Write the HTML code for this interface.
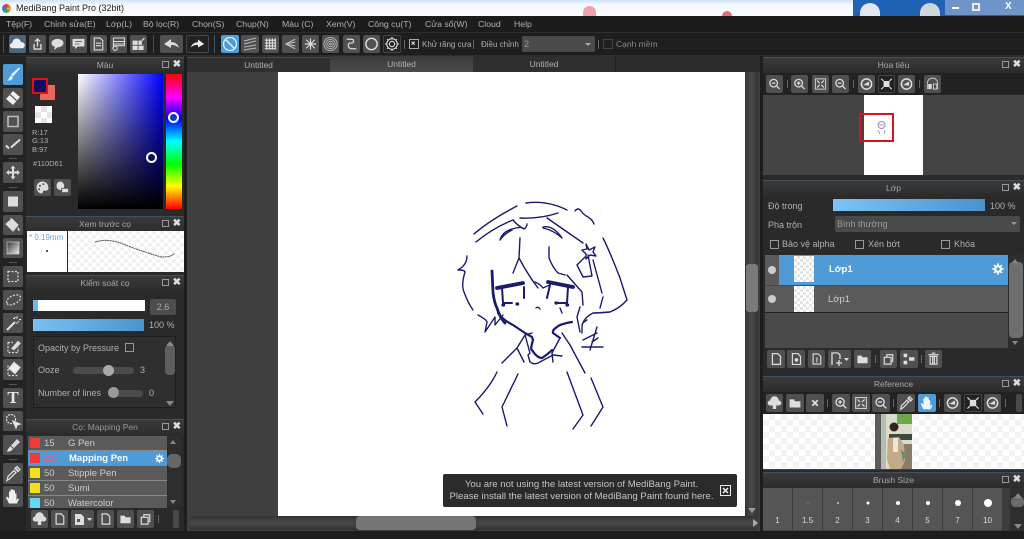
<!DOCTYPE html>
<html><head><meta charset="utf-8"><title>MediBang Paint Pro</title>
<style>
*{box-sizing:border-box}
html,body{margin:0;padding:0;width:1024px;height:539px;overflow:hidden;background:#1d1d1d}
body{position:relative;font-family:"Liberation Sans","Noto Sans CJK SC",sans-serif;font-size:9px;color:#b0b0b0}
.a,.t,.b,.h,.c{position:absolute}
.t{white-space:nowrap;line-height:11px}
.m{font-size:8.7px}
.b{background:#505050;border-radius:2px;display:block}
.b svg{position:absolute;left:0;top:0;width:100%;height:100%}
.bl{background:#4f9cd8}
.dk{background:#222;border:1px solid #444}
.h{background:linear-gradient(#3a3a3a,#2c2c2c);border-top:1px solid #41505c;text-align:center;line-height:15px;color:#a8a8a8;font-size:8.5px;height:16px}
.h i{position:absolute;right:15px;top:3px;width:7px;height:7px;border:1px solid #999;font-size:0}
.h b{position:absolute;right:3px;top:1px;color:#ddd;font-size:10px;line-height:11px}
.c{width:10px;height:10px;border:1px solid #999}
.ck{background-color:#fff;background-image:linear-gradient(45deg,#e4e4e4 25%,transparent 25%,transparent 75%,#e4e4e4 75%),linear-gradient(45deg,#e4e4e4 25%,transparent 25%,transparent 75%,#e4e4e4 75%);background-size:8px 8px;background-position:0 0,4px 4px}
.row{position:absolute;left:28px;width:139px;height:15px;background:#5a5a5a;border-bottom:1px solid #888;color:#ccc;line-height:16px;font-size:9.5px}
.row s{position:absolute;left:2px;top:2px;width:10px;height:10px;text-decoration:none}
.row u{position:absolute;left:16px;text-decoration:none}
.row em{position:absolute;left:40px;font-style:normal}
.cell{position:absolute;top:488px;width:29px;height:43px;background:#555;color:#ddd;text-align:center;font-size:8px;border-bottom:1px solid #444}
.cell s{position:absolute;left:50%;top:15px;border-radius:50%;background:#fff;transform:translate(-50%,-50%)}
.cell u{position:absolute;left:0;right:0;top:27px;text-decoration:none;line-height:11px}
svg.ic{fill:none;stroke:#ddd;stroke-width:1.6}
</style></head><body>

<svg width="0" height="0" style="position:absolute">
<symbol id="page" viewBox="0 0 20 20"><path d="M6 4h6l3 3v9H6z" fill="none" stroke="#ddd" stroke-width="1.4"/></symbol>
<symbol id="folder" viewBox="0 0 20 20"><path d="M4 6h5l1 2h6v7H4z" fill="#ddd"/></symbol>
<symbol id="copy" viewBox="0 0 20 20"><path d="M5 8h8v8H5zM8 8V5h7v8h-2" fill="none" stroke="#ddd" stroke-width="1.4"/></symbol>
<symbol id="plus" viewBox="0 0 20 20"><circle cx="9" cy="9" r="4.5" fill="none" stroke="#ddd" stroke-width="1.5"/><path d="M12 12l4 4M7 9h4M9 7v4" stroke="#ddd" stroke-width="1.5"/></symbol>
<symbol id="minus" viewBox="0 0 20 20"><circle cx="9" cy="9" r="4.5" fill="none" stroke="#ddd" stroke-width="1.5"/><path d="M12 12l4 4M7 9h4" stroke="#ddd" stroke-width="1.5"/></symbol>
<symbol id="fit" viewBox="0 0 20 20"><path d="M4 4h12v12H4z" fill="none" stroke="#ccc" stroke-width="1.2"/><path d="M6 6l3 3M14 6l-3 3M6 14l3-3M14 14l-3-3" stroke="#ddd" stroke-width="1.4"/></symbol>
<symbol id="rotl" viewBox="0 0 20 20"><circle cx="10" cy="10" r="6" fill="none" stroke="#ddd" stroke-width="1.8"/><path d="M6 11l7-4v5z" fill="#ddd"/></symbol>
<symbol id="flip" viewBox="0 0 20 20"><path d="M6 6h8v8H6z" fill="#ddd"/><path d="M3 3l3 3M17 3l-3 3M3 17l3-3M17 17l-3-3" stroke="#ddd" stroke-width="1.5"/></symbol>
<symbol id="cloud" viewBox="0 0 20 20"><path d="M4 15a3 3 0 0 1 0-6 5 5 0 0 1 10-1 3.5 3.5 0 0 1 2 7z" fill="#eee"/></symbol>
<symbol id="gear" viewBox="0 0 20 20"><circle cx="10" cy="10" r="4" fill="none" stroke="#fff" stroke-width="3"/><path d="M10 2v4M10 14v4M2 10h4M14 10h4M4.500 4.500l3 3M12.500 12.500l3 3M15.500 4.500l-3 3M7.500 12.500l-3 3" stroke="#fff" stroke-width="2.400"/></symbol>
<symbol id="upcloud" viewBox="0 0 20 20"><path d="M5 13a3 3 0 0 1 0-6 5 5 0 0 1 10 0 3 3 0 0 1 0 6h-3v4H8v-4z" fill="#ddd"/></symbol>
</svg>

<!-- title bar -->
<div class="a" style="left:0;top:0;width:1024px;height:16px;background:linear-gradient(#cfe3f7,#f4f9fd 30%,#fafcff)"></div>
<div class="a" style="left:853px;top:0;width:171px;height:16px;background:#1f63b4"></div>
<div class="a" style="left:945px;top:0;width:79px;height:15px;background:#6d95c8"></div>
<div class="a" style="left:583px;top:6px;width:13px;height:10px;border-radius:7px 7px 0 0;background:#efa1ac"></div>
<div class="a" style="left:722px;top:11px;width:10px;height:5px;border-radius:5px 5px 0 0;background:#e86a75"></div>
<div class="a" style="left:860px;top:3px;width:20px;height:13px;border-radius:10px 10px 0 0;background:#dfe8f2"></div>
<div class="a" style="left:920px;top:3px;width:20px;height:13px;border-radius:10px 10px 0 0;background:#cfd6dd"></div>
<div class="a" style="left:2px;top:4px;width:9px;height:9px;border-radius:50%;background:conic-gradient(#e33,#ea3 25%,#3a5 50%,#37c 75%,#e33)"></div>
<div class="t" style="left:16px;top:3px;color:#222;font-size:9px">MediBang Paint Pro (32bit)</div>
<div class="a" style="left:952px;top:7px;width:7px;height:2px;background:#fff"></div>
<div class="a" style="left:972px;top:3px;width:8px;height:8px;border:2px solid #eee"></div>
<div class="t" style="left:1005px;top:1px;color:#fff;font-size:10px;font-weight:bold">X</div>

<!-- menu -->
<div class="a" style="left:0;top:16px;width:1024px;height:17px;background:#1c1c1c;border-bottom:1px solid #2c2c2c"></div>
<div class="t m" style="left:6px;top:19px">Tệp(F)</div>
<div class="t m" style="left:44px;top:19px">Chỉnh sửa(E)</div>
<div class="t m" style="left:106px;top:19px">Lớp(L)</div>
<div class="t m" style="left:143px;top:19px">Bộ lọc(R)</div>
<div class="t m" style="left:192px;top:19px">Chọn(S)</div>
<div class="t m" style="left:236px;top:19px">Chụp(N)</div>
<div class="t m" style="left:282px;top:19px">Màu (C)</div>
<div class="t m" style="left:326px;top:19px">Xem(V)</div>
<div class="t m" style="left:368px;top:19px">Công cụ(T)</div>
<div class="t m" style="left:425px;top:19px">Cửa sổ(W)</div>
<div class="t m" style="left:478px;top:19px">Cloud</div>
<div class="t m" style="left:514px;top:19px">Help</div>

<!-- toolbar -->
<div class="a" style="left:0;top:33px;width:1024px;height:23px;background:#1e1e1e;border-bottom:1px solid #2d2d2d"></div>
<div class="a" style="left:3px;top:35px;width:1px;height:18px;background:#35566f"></div>
<div class="b" style="left:9px;top:35px;width:17px;height:18px;background:#4a6580"><svg><use href="#cloud"/></svg></div>
<div class="b" style="left:29px;top:35px;width:17px;height:18px"><svg viewBox="0 0 20 20" class="ic"><path d="M6 10v6h8v-6M10 13V4M7 7l3-3 3 3"/></svg></div>
<div class="b" style="left:49px;top:35px;width:17px;height:18px"><svg viewBox="0 0 20 20"><ellipse cx="10" cy="9" rx="7" ry="5" fill="#ddd"/><path d="M7 13l-1 4 4-3z" fill="#ddd"/></svg></div>
<div class="b" style="left:70px;top:35px;width:17px;height:18px"><svg viewBox="0 0 20 20"><path d="M3 4h14v9H9l-3 3v-3H3z" fill="#ddd"/><path d="M6 7h8M6 10h5" stroke="#555"/></svg></div>
<div class="b" style="left:90px;top:35px;width:17px;height:18px"><svg viewBox="0 0 20 20" class="ic" style="stroke-width:1.3"><path d="M5 3h7l3 3v11H5zM7 9h6M7 12h6"/></svg></div>
<div class="b" style="left:110px;top:35px;width:17px;height:18px"><svg viewBox="0 0 20 20" class="ic" style="stroke-width:1.2"><path d="M4 3h13v9H4zM4 7h13M4 10h13M4 12v3"/><circle cx="6" cy="15" r="2.500"/></svg></div>
<div class="b" style="left:130px;top:35px;width:17px;height:18px"><svg viewBox="0 0 20 20"><path d="M3 6h6v5H3zM10 6h4v5h-4zM3 12h6v5H3zM10 12h6v5h-6z" fill="#ddd"/><path d="M14 6l3-3" stroke="#ddd" stroke-width="1.500"/></svg></div>
<div class="a" style="left:153px;top:35px;width:1px;height:18px;background:#35566f"></div>
<div class="b" style="left:160px;top:35px;width:23px;height:18px"><svg viewBox="0 0 23 18"><path d="M4 9l7-5v3c4 0 7 2 8 6-2-2-4-3-8-3v3z" fill="#ddd"/></svg></div>
<div class="b dk" style="left:186px;top:35px;width:23px;height:18px"><svg viewBox="0 0 23 18"><path d="M19 9l-7-5v3c-4 0-7 2-8 6 2-2 4-3 8-3v3z" fill="#eee"/></svg></div>
<div class="a" style="left:214px;top:35px;width:1px;height:18px;background:#35566f"></div>
<div class="b bl" style="left:221px;top:35px;width:18px;height:18px"><svg viewBox="0 0 18 18" class="ic" style="stroke:#e8f4ff;stroke-width:1.300"><circle cx="9" cy="9" r="6.500"/><path d="M4.500 4.500l9 9"/></svg></div>
<div class="b" style="left:241px;top:35px;width:18px;height:18px"><svg viewBox="0 0 18 18" class="ic" style="stroke-width:1;stroke:#bbb"><path d="M3 6l12-3M3 9l12-3M3 12l12-2M3 15l12-2"/></svg></div>
<div class="b" style="left:262px;top:35px;width:17px;height:18px"><svg viewBox="0 0 18 18" class="ic" style="stroke-width:1.200"><path d="M3 5h12M3 8h12M3 11h12M3 14h12M5 3v12M8 3v12M11 3v12M14 3v12"/></svg></div>
<div class="b" style="left:282px;top:35px;width:17px;height:18px"><svg viewBox="0 0 18 18" class="ic" style="stroke-width:1.200;stroke:#bbb"><path d="M14 4L4 9l10 5M14 7L4 9l10 2"/></svg></div>
<div class="b" style="left:302px;top:35px;width:17px;height:18px"><svg viewBox="0 0 18 18" class="ic" style="stroke-width:1.200"><path d="M9 3v12M3 9h12M4.500 4.500l9 9M13.500 4.500l-9 9"/></svg></div>
<div class="b" style="left:322px;top:35px;width:17px;height:18px"><svg viewBox="0 0 18 18" class="ic" style="stroke-width:.9;stroke:#bbb"><circle cx="9" cy="9" r="7"/><circle cx="9" cy="9" r="5"/><circle cx="9" cy="9" r="3"/><circle cx="9" cy="9" r="1"/></svg></div>
<div class="b" style="left:343px;top:35px;width:17px;height:18px"><svg viewBox="0 0 18 18" class="ic" style="stroke-width:1.300"><path d="M4 4h5c3 0 3 4 0 4H7c-2 0-2 6 2 6h5"/></svg></div>
<div class="b" style="left:363px;top:35px;width:17px;height:18px"><svg viewBox="0 0 18 18" class="ic" style="stroke-width:1.500"><circle cx="9" cy="9" r="6"/></svg></div>
<div class="b dk" style="left:383px;top:35px;width:18px;height:18px"><svg viewBox="0 0 18 18" class="ic" style="stroke-width:1.200"><circle cx="9" cy="9" r="3"/><circle cx="9" cy="9" r="6"/><path d="M9 1v2M9 15v2M1 9h2M15 9h2M3.500 3.500l1.500 1.500M13 13l1.500 1.500M14.500 3.500L13 5M5 13l-1.500 1.500"/></svg></div>
<div class="a" style="left:404px;top:40px;width:1px;height:9px;background:#666"></div>
<div class="c" style="left:409px;top:39px;border-color:#aaa"><svg viewBox="0 0 10 10" style="position:absolute;left:0;top:0;width:8px;height:8px"><path d="M2 2l4 4M6 2l-4 4" stroke="#ddd" stroke-width="1.300"/></svg></div>
<div class="t" style="left:422px;top:39px;font-size:8px">Khử răng cưa</div>
<div class="a" style="left:473px;top:40px;width:1px;height:9px;background:#666"></div>
<div class="t" style="left:481px;top:39px;font-size:8px">Điều chỉnh</div>
<div class="a" style="left:522px;top:36px;width:73px;height:16px;background:#4a4a4a;border-radius:2px"></div>
<div class="t" style="left:524px;top:39px;color:#999">2</div>
<div class="a" style="left:585px;top:43px;border:3px solid transparent;border-top:3px solid #aaa"></div>
<div class="a" style="left:598px;top:40px;width:1px;height:9px;background:#666"></div>
<div class="c" style="left:603px;top:39px;border-color:#444"></div>
<div class="t" style="left:616px;top:39px;font-size:8.5px;color:#888">Cạnh mềm</div>

<!-- tabs and canvas -->
<div class="a" style="left:187px;top:56px;width:573px;height:16px;background:#2c2c2c"></div>
<div class="a" style="left:187px;top:57px;width:143px;height:15px;background:#2f2f2f;border-top:1px solid #3c4d5c;text-align:center;line-height:15px;font-size:8.500px">Untitled</div>
<div class="a" style="left:330px;top:56px;width:143px;height:16px;background:linear-gradient(#3b3b3b,#4a4a4a);text-align:center;line-height:17px;font-size:8.500px">Untitled</div>
<div class="a" style="left:473px;top:57px;width:143px;height:15px;background:#2f2f2f;text-align:center;line-height:15px;font-size:8.500px;border-right:1px solid #222">Untitled</div>
<div class="a" style="left:187px;top:72px;width:573px;height:459px;background:#3f3f3f"></div>
<div class="a" style="left:278px;top:72px;width:467px;height:444px;background:#fff"></div>

<svg class="a" style="left:0;top:0" width="1024" height="539" viewBox="0 0 1024 539" fill="none" stroke="#1c1a6e" stroke-width="1.400" stroke-linecap="round" stroke-linejoin="round">
<path d="M474 234Q490 220 517 206M526 203Q547 200 567 210M575 211Q578 207 581 211T588 217T594 224M476 242Q493 228 513 220M520 218Q540 219 558 213"/>
<path d="M500 240Q502 232 512 229T524 229M513 220Q518 226 524 229Q527 227 527 224M500 240Q504 234 512 230M543 227Q553 225 562 238M543 228Q553 230 562 238M547 218L583 243"/>
<path d="M586 244L589 250L595 247L593 252L596 256L590 255L586 259L586 254L582 250L587 249Z"/>
<path d="M585 257L577 265L583 277L592 276L588 255M603 238Q610 252 620 278L627 300Q620 308 610 312Q598 313 593 313Q585 317 583 323M593 260L602 293M603 297L600 308"/>
<path d="M467 256Q467 265 458 270Q465 270 465 272Q461 285 464 292Q468 303 473 310"/>
<path d="M520 238L519 258L513 273M519 258Q528 275 538 288M549 247V258Q553 268 558 273L565 275M535 282Q540 284 543 288Q547 286 550 285M567 275L582 292L583 305"/>
<path d="M497 288L523 283M548 282L573 287" stroke-width="3.800"/>
<path d="M492 271L493 292Q494 302 497 308Q500 318 505 323" stroke-width="2.800"/>
<path d="M502 288L503 303M524 287V298M550 285L547 298M568 287L567 303M503 303L512 303M558 303L567 303" stroke-width="2"/>
<path d="M503 305h.6M517 304h.6M556 303h.6M567 305h.6" stroke-width="3.200"/>
<path d="M536 308Q538 306 540 309M560 308L562 313"/>
<path d="M498 313Q503 320 513 325L525 333L532 337L533 340" stroke-width="2.200"/>
<path d="M533 340Q530 350 532 350Q537 358 542 358Q548 354 552 350M572 322Q560 324 557 327Q552 330 553 333L560 338" stroke-width="2.200"/>
<path d="M560 338L552 353L553 362M528 355L530 362Q534 365 538 363L553 355L562 356M532 333L525 335L517 348L524 362M517 348L502 363M525 335L530 353L528 355"/>
<path d="M478 315Q487 320 487 322L485 332L495 317V325L503 315M562 333L570 345L585 373"/>
<path d="M497 372Q490 387 475 402L483 414M518 374L502 407L507 426M567 372L583 415L573 429M591 378L603 407L591 426"/>
<path d="M587 320Q582 323 582 325V333M580 307L577 317L580 332M597 327L590 350M582 347L603 347M583 340L597 333M592 342L598 338"/>
</svg>

<!-- notification -->
<div class="a" style="left:443px;top:474px;width:294px;height:33px;background:#2b2b2b;border-radius:2px"></div>
<div class="t" style="left:447px;top:479px;width:269px;text-align:center;color:#c4c4c4;font-size:9.6px;line-height:12px">You are not using the latest version of MediBang Paint.<br>Please install the latest version of MediBang Paint found here.</div>
<div class="a" style="left:720px;top:485px;width:11px;height:11px;border:1px solid #eee"><svg viewBox="0 0 9 9" style="position:absolute;left:0;top:0;width:9px;height:9px"><path d="M2 2l5 5M7 2L2 7" stroke="#eee" stroke-width="1.500"/></svg></div>

<!-- canvas scrollbars -->
<div class="a" style="left:745px;top:72px;width:13px;height:444px;background:linear-gradient(90deg,#333,#4a4a4a,#333)"></div>
<div class="a" style="left:746px;top:264px;width:12px;height:48px;background:#7a7a7a;border-radius:3px"></div>
<div class="a" style="left:748px;top:508px;border:4px solid transparent;border-top:5px solid #999"></div>
<div class="a" style="left:190px;top:516px;width:568px;height:14px;background:linear-gradient(#333,#484848,#333)"></div>
<div class="a" style="left:356px;top:516px;width:120px;height:14px;background:#757575;border-radius:4px"></div>
<div class="a" style="left:753px;top:519px;border:4px solid transparent;border-left:5px solid #aaa"></div>

<!-- tool strip -->
<div class="a" style="left:0;top:56px;width:26px;height:475px;background:#232323"></div>
<div class="b bl" style="left:3px;top:64px;width:20px;height:21px"><svg viewBox="0 0 20 20"><path d="M16 3l1 1-7 8-2-2zM8 11l2 2c-1 3-3 3-6 3 2-1 2-3 4-5z" fill="#eef6ff"/></svg></div>
<div class="b" style="left:3px;top:88px;width:20px;height:20px"><svg viewBox="0 0 20 20"><path d="M10 3l7 6-7 8-7-6z" fill="#eee"/><path d="M7 6.500l6.500 6" stroke="#555" stroke-width="1.200"/></svg></div>
<div class="b" style="left:3px;top:111px;width:20px;height:21px"><svg viewBox="0 0 20 20" class="ic" style="stroke:#bbb"><path d="M5 5h10v10H5z"/></svg></div>
<div class="b" style="left:3px;top:134px;width:20px;height:21px"><svg viewBox="0 0 20 20" class="ic" style="stroke-width:2"><path d="M3 11l3 3M8 13l9-8" /></svg></div>
<div class="a" style="left:9px;top:158px;width:8px;height:1px;background:#555"></div>
<div class="b" style="left:3px;top:162px;width:20px;height:21px"><svg viewBox="0 0 20 20"><path d="M10 3l2.500 3h-1.500v3h3V7.500l3 2.500-3 2.500V11h-3v3h1.500L10 17l-2.500-3H9v-3H6v1.500L3 10l3-2.500V9h3V6H7.500z" fill="#ddd"/></svg></div>
<div class="a" style="left:9px;top:187px;width:8px;height:1px;background:#555"></div>
<div class="b" style="left:3px;top:191px;width:20px;height:21px"><svg viewBox="0 0 20 20"><rect x="5" y="5" width="10" height="10" fill="#ddd"/></svg></div>
<div class="b" style="left:3px;top:215px;width:20px;height:20px"><svg viewBox="0 0 20 20"><path d="M3 9l6-5 6 6-5 6zM8 3v4" fill="#ddd" stroke="#ddd"/><path d="M15 12c2 2 2 4 1 4s-2-2-1-4z" fill="#ddd"/></svg></div>
<div class="b" style="left:3px;top:238px;width:20px;height:20px"><svg viewBox="0 0 20 20"><defs><linearGradient id="g1" x1="0" y1="0" x2="1" y2="1"><stop offset="0" stop-color="#333"/><stop offset="1" stop-color="#eee"/></linearGradient></defs><rect x="4" y="4" width="12" height="12" fill="url(#g1)" stroke="#ccc" stroke-width=".7"/></svg></div>
<div class="a" style="left:9px;top:262px;width:8px;height:1px;background:#555"></div>
<div class="b" style="left:3px;top:266px;width:20px;height:21px"><svg viewBox="0 0 20 20" class="ic" style="stroke-dasharray:2 1.500;stroke-width:1.200"><path d="M5 5h10v10H5z"/></svg></div>
<div class="b" style="left:3px;top:290px;width:20px;height:20px"><svg viewBox="0 0 20 20" class="ic" style="stroke-dasharray:2 1.500;stroke-width:1.200"><path d="M4 13c-2-4 6-9 11-8s2 7-4 9-6 1-7-1z"/></svg></div>
<div class="b" style="left:3px;top:313px;width:20px;height:20px"><svg viewBox="0 0 20 20" class="ic"><path d="M4 17L12 9" stroke-width="2.200"/><path d="M14 3v3M14 9v2M10 5.500h2M16 6.500h2M11.500 4l1 1M16 9l-1-1" stroke-width="1"/></svg></div>
<div class="b" style="left:3px;top:336px;width:20px;height:21px"><svg viewBox="0 0 20 20" class="ic" style="stroke-width:1.200"><path d="M5 6h5M5 6v10h10v-5" stroke-dasharray="2 1.500"/><path d="M9 12l6-7 2 2-6 6z" fill="#ddd"/></svg></div>
<div class="b" style="left:3px;top:359px;width:20px;height:21px"><svg viewBox="0 0 20 20" class="ic" style="stroke-width:1.200"><path d="M5 6v10h10" stroke-dasharray="2 1.500"/><path d="M11 3l6 5-5 6-6-5z" fill="#eee"/></svg></div>
<div class="a" style="left:9px;top:384px;width:8px;height:1px;background:#555"></div>
<div class="b" style="left:3px;top:388px;width:20px;height:20px;text-align:center;font:bold 17px/20px 'Liberation Serif',serif;color:#e6e6e6">T</div>
<div class="b" style="left:3px;top:411px;width:20px;height:20px"><svg viewBox="0 0 20 20" class="ic" style="stroke-width:1.200"><circle cx="8" cy="8" r="4.500" stroke-dasharray="2 1"/><path d="M10 10l7 3-3 1-1 3z" fill="#eee"/></svg></div>
<div class="b" style="left:3px;top:435px;width:20px;height:20px"><svg viewBox="0 0 20 20"><path d="M5 14L14 4l3 3-9 9-4 1z" fill="#ddd"/><path d="M8 11l3 3" stroke="#555" stroke-width="1"/></svg></div>
<div class="a" style="left:9px;top:459px;width:8px;height:1px;background:#555"></div>
<div class="b" style="left:3px;top:463px;width:20px;height:21px"><svg viewBox="0 0 20 20" class="ic" style="stroke-width:1.300"><path d="M4 17l1-4 6-6 2 2-6 6zM12 4l4 4M14 3l3 3-2 2-3-3z"/></svg></div>
<div class="b" style="left:3px;top:486px;width:20px;height:21px"><svg viewBox="0 0 20 20"><path d="M6 17l-3-6 1-1 2 2V5h1.500v5-7H9v7-7h1.500v7-6H12v7-4h1.500v7l1-2 1.500.5L14 17z" fill="#eee"/></svg></div>

<!-- left panels -->
<div class="a" style="left:26px;top:56px;width:158px;height:475px;background:#2a2a2a"></div>
<div class="h" style="left:26px;top:57px;width:158px">Màu<i></i><b>✖</b></div>
<div class="a" style="left:32px;top:78px;width:16px;height:16px;background:#110d61;border:2px solid #e01018;z-index:2"></div>
<div class="a" style="left:40px;top:85px;width:15px;height:15px;background:#e8695a"></div>
<div class="a ck" style="left:35px;top:106px;width:17px;height:17px;background-size:12px 12px;background-position:0 0,6px 6px"></div>
<div class="t" style="left:32px;top:129px;font-size:7.500px;line-height:8.300px">R:17<br>G:13<br>B:97</div>
<div class="t" style="left:33px;top:158px;font-size:7.500px">#110D61</div>
<div class="b" style="left:34px;top:179px;width:17px;height:17px"><svg viewBox="0 0 20 20"><path d="M10 3c-4 0-7 3-7 7s3 7 6 7c2 0 1-2 2-3s5 1 6-3c0-5-3-8-7-8z" fill="#ddd"/><circle cx="7" cy="8" r="1.200" fill="#555"/><circle cx="11" cy="6" r="1.200" fill="#555"/><circle cx="6" cy="12" r="1.200" fill="#555"/></svg></div>
<div class="b" style="left:54px;top:179px;width:17px;height:17px"><svg viewBox="0 0 20 20"><path d="M8 3C5 3 3 5 3 8s2 5 5 5 4-3 4-5-2-5-4-5z" fill="#ddd"/><rect x="9" y="11" width="8" height="5" fill="#ddd" stroke="#555"/></svg></div>
<div class="a" style="left:78px;top:74px;width:85px;height:135px;background:linear-gradient(transparent,#000),linear-gradient(90deg,#fff,#0000ff)"></div>
<div class="a" style="left:166px;top:74px;width:16px;height:135px;background:linear-gradient(#f00,#f0f 17%,#00f 33%,#0ff 50%,#0f0 67%,#ff0 83%,#f00)"></div>
<div class="a" style="left:168px;top:112px;width:11px;height:11px;border-radius:50%;border:2px solid #fff;background:#0a36d0"></div>
<div class="a" style="left:146px;top:152px;width:11px;height:11px;border-radius:50%;border:2px solid #fff"></div>

<div class="h" style="left:26px;top:216px;width:158px">Xem trước cọ<i></i><b>✖</b></div>
<div class="a" style="left:27px;top:231px;width:40px;height:41px;background:#fff"></div>
<div class="t" style="left:29px;top:232px;font-size:8px;color:#62acdf">* 0.19mm</div>
<div class="a" style="left:46px;top:250px;width:2px;height:2px;background:#555"></div>
<div class="a ck" style="left:68px;top:231px;width:116px;height:41px;background-image:linear-gradient(45deg,#f2f2f2 25%,transparent 25%,transparent 75%,#f2f2f2 75%),linear-gradient(45deg,#f2f2f2 25%,transparent 25%,transparent 75%,#f2f2f2 75%)"></div>
<svg class="a" style="left:68px;top:231px" width="116" height="41"><path d="M27 11Q40 7 55 13T93 26Q105 26 106 22" fill="none" stroke="#555" stroke-width="1" stroke-dasharray="2 .5"/></svg>

<div class="h" style="left:26px;top:275px;width:158px">Kiểm soát cọ<i></i><b>✖</b></div>
<div class="a" style="left:33px;top:300px;width:112px;height:11px;background:#fff"></div>
<div class="a" style="left:33px;top:300px;width:5px;height:11px;background:#6db8ec"></div>
<div class="a" style="left:150px;top:299px;width:26px;height:16px;background:#4d4d4d;text-align:center;line-height:16px;font-size:9px;border-radius:2px;color:#aaa">2.6</div>
<div class="a" style="left:33px;top:319px;width:111px;height:12px;background:linear-gradient(90deg,#79c1f2,#4a94cf)"></div>
<div class="t" style="left:149px;top:320px;font-size:9px">100 %</div>
<div class="a" style="left:33px;top:336px;width:143px;height:72px;background:#2f2f2f;border:1px solid #1e1e1e"></div>
<div class="t" style="left:38px;top:343px;font-size:9px">Opacity by Pressure</div>
<div class="c" style="left:125px;top:343px;width:9px;height:9px"></div>
<div class="t" style="left:38px;top:365px;font-size:9px">Ooze</div>
<div class="a" style="left:73px;top:367px;width:61px;height:7px;background:#4c4c4c;border-radius:4px"></div>
<div class="a" style="left:103px;top:365px;width:11px;height:11px;background:#aaa;border-radius:50%"></div>
<div class="t" style="left:140px;top:365px;font-size:9px">3</div>
<div class="t" style="left:38px;top:388px;font-size:9px">Number of lines</div>
<div class="a" style="left:108px;top:390px;width:35px;height:7px;background:#4c4c4c;border-radius:4px"></div>
<div class="a" style="left:108px;top:387px;width:11px;height:11px;background:#999;border-radius:50%"></div>
<div class="t" style="left:149px;top:388px;font-size:9px">0</div>
<div class="a" style="left:165px;top:345px;width:10px;height:30px;background:#5e5e5e;border-radius:4px"></div>
<div class="a" style="left:166px;top:337px;border:4px solid transparent;border-bottom:5px solid #888"></div>
<div class="a" style="left:166px;top:401px;border:4px solid transparent;border-top:5px solid #888"></div>

<div class="h" style="left:26px;top:419px;width:158px;color:#999">Cọ: Mapping Pen<i></i><b>✖</b></div>
<div class="row" style="top:436px"><s style="background:#f23a3a"></s><u>15</u><em>G Pen</em></div>
<div class="row" style="top:451px;background:#4d9bd8;color:#fff;font-weight:bold"><s style="background:#f23a3a"></s><u style="color:#f55a7a">2.6</u><em style="left:41px">Mapping Pen</em><svg style="position:absolute;left:126px;top:2px" width="11" height="11"><use href="#gear"/></svg></div>
<div class="row" style="top:466px"><s style="background:#f2df1f"></s><u>50</u><em>Stipple Pen</em></div>
<div class="row" style="top:481px"><s style="background:#f2df1f"></s><u>50</u><em>Sumi</em></div>
<div class="row" style="top:496px;height:12px;overflow:hidden;border:0"><s style="background:#66d6f6"></s><u>50</u><em>Watercolor</em></div>
<div class="a" style="left:168px;top:436px;width:13px;height:72px;background:#2e2e2e"></div>
<div class="a" style="left:167px;top:454px;width:14px;height:14px;background:#666;border-radius:5px"></div>
<div class="a" style="left:170px;top:437px;border:3px solid transparent;border-bottom:4px solid #888"></div>
<div class="a" style="left:170px;top:500px;border:3px solid transparent;border-top:4px solid #888"></div>
<div class="b" style="left:31px;top:510px;width:17px;height:18px"><svg><use href="#upcloud"/></svg></div>
<div class="b" style="left:51px;top:510px;width:17px;height:18px"><svg><use href="#page"/></svg></div>
<div class="b" style="left:71px;top:510px;width:23px;height:18px"><svg viewBox="0 0 23 18"><path d="M4 4h6l3 3v8H4z" fill="#ddd"/><path d="M6 9h3v3H6z" fill="#555"/><path d="M16 8h5l-2.500 3z" fill="#ddd"/></svg></div>
<div class="b" style="left:97px;top:510px;width:17px;height:18px"><svg><use href="#page"/></svg></div>
<div class="b" style="left:117px;top:510px;width:17px;height:18px"><svg><use href="#folder"/></svg></div>
<div class="b" style="left:137px;top:510px;width:17px;height:18px"><svg><use href="#copy"/></svg></div>
<div class="a" style="left:158px;top:515px;width:1px;height:8px;background:#666"></div>
<div class="a" style="left:173px;top:510px;width:6px;height:18px;background:#4a4a4a;border-radius:2px"></div>

<!-- right panels -->
<div class="a" style="left:763px;top:56px;width:261px;height:475px;background:#2a2a2a"></div>
<div class="h" style="left:763px;top:57px;width:261px">Hoa tiêu<i></i><b>✖</b></div>
<div class="a" style="left:763px;top:73px;width:261px;height:22px;background:#222"></div>
<div class="b" style="left:766px;top:75px;width:17px;height:18px"><svg><use href="#minus"/></svg></div>
<div class="a" style="left:787px;top:80px;width:1px;height:8px;background:#666"></div>
<div class="b" style="left:791px;top:75px;width:17px;height:18px"><svg><use href="#plus"/></svg></div>
<div class="b" style="left:812px;top:75px;width:17px;height:18px"><svg><use href="#fit"/></svg></div>
<div class="b" style="left:832px;top:75px;width:17px;height:18px"><svg><use href="#minus"/></svg></div>
<div class="a" style="left:853px;top:80px;width:1px;height:8px;background:#666"></div>
<div class="b" style="left:858px;top:75px;width:17px;height:18px"><svg><use href="#rotl"/></svg></div>
<div class="b dk" style="left:878px;top:75px;width:17px;height:18px"><svg><use href="#flip"/></svg></div>
<div class="b" style="left:898px;top:75px;width:17px;height:18px"><svg><use href="#rotl"/></svg></div>
<div class="a" style="left:919px;top:80px;width:1px;height:8px;background:#666"></div>
<div class="b" style="left:924px;top:75px;width:17px;height:18px"><svg viewBox="0 0 20 20"><path d="M4 16V9a6 6 0 0 1 12 0v7" fill="none" stroke="#ccc"/><path d="M5 10h4v6H5z" fill="#ddd"/><path d="M11 10h4v6h-4z" fill="none" stroke="#ddd"/></svg></div>
<div class="a" style="left:763px;top:95px;width:261px;height:80px;background:#444"></div>
<div class="a" style="left:864px;top:95px;width:59px;height:80px;background:#fff"></div>
<div class="a" style="left:859px;top:113px;width:35px;height:29px;border:2px solid #e01018"></div>
<svg class="a" style="left:876px;top:120px" width="12" height="15"><circle cx="5.500" cy="5" r="3.500" fill="none" stroke="#8d8fbf"/><path d="M3 5h5M2 10l2 4M9 10l-1 4" stroke="#9a9cc8" fill="none"/></svg>

<div class="h" style="left:763px;top:180px;width:261px">Lớp<i></i><b>✖</b></div>
<div class="t" style="left:768px;top:201px">Độ trong</div>
<div class="a" style="left:833px;top:199px;width:152px;height:12px;background:linear-gradient(90deg,#7cc4f5,#4a92cc)"></div>
<div class="t" style="left:990px;top:201px">100 %</div>
<div class="t" style="left:768px;top:220px">Pha trộn</div>
<div class="a" style="left:835px;top:216px;width:185px;height:16px;background:#4a4a4a;border-radius:2px"></div>
<div class="t" style="left:837px;top:219px;color:#999">Bình thường</div>
<div class="a" style="left:1011px;top:222px;border:3px solid transparent;border-top:3px solid #999"></div>
<div class="c" style="left:770px;top:240px;width:9px;height:9px"></div>
<div class="t" style="left:782px;top:239px">Bảo vệ alpha</div>
<div class="c" style="left:855px;top:240px;width:9px;height:9px"></div>
<div class="t" style="left:868px;top:239px">Xén bớt</div>
<div class="c" style="left:941px;top:240px;width:9px;height:9px"></div>
<div class="t" style="left:954px;top:239px">Khóa</div>
<div class="a" style="left:765px;top:255px;width:243px;height:93px;background:#4a4a4a"></div>
<div class="a" style="left:765px;top:255px;width:14px;height:30px;background:#5a5a5a"></div>
<div class="a" style="left:779px;top:255px;width:229px;height:30px;background:#4e9bd7"></div>
<div class="a" style="left:765px;top:286px;width:243px;height:27px;background:#5a5a5a;border-bottom:1px solid #222"></div>
<div class="a" style="left:768px;top:266px;width:8px;height:8px;border-radius:50%;background:#ccc"></div>
<div class="a" style="left:768px;top:295px;width:8px;height:8px;border-radius:50%;background:#ccc"></div>
<div class="a ck" style="left:794px;top:256px;width:20px;height:26px;background-size:6px 6px;background-position:0 0,3px 3px"></div>
<div class="a ck" style="left:794px;top:286px;width:20px;height:26px;background-size:6px 6px;background-position:0 0,3px 3px"></div>
<div class="t" style="left:829px;top:264px;color:#fff;font-weight:bold;font-size:9.500px">Lớp1</div>
<div class="t" style="left:828px;top:294px;color:#ccc;font-size:9.500px">Lớp1</div>
<svg class="a" style="left:991px;top:262px" width="14" height="14"><use href="#gear"/></svg>
<div class="a" style="left:1009px;top:255px;width:15px;height:93px;background:#2e2e2e"></div>
<div class="a" style="left:1009px;top:262px;width:14px;height:76px;background:#6e6e6e;border-radius:4px"></div>
<div class="a" style="left:1012px;top:256px;border:3px solid transparent;border-bottom:4px solid #888"></div>
<div class="a" style="left:1012px;top:341px;border:3px solid transparent;border-top:4px solid #888"></div>
<div class="b" style="left:767px;top:350px;width:18px;height:18px"><svg><use href="#page"/></svg></div>
<div class="b" style="left:787px;top:350px;width:18px;height:18px"><svg viewBox="0 0 20 20"><path d="M6 4h6l3 3v9H6z" fill="none" stroke="#ddd" stroke-width="1.300"/><circle cx="10.500" cy="11" r="2" fill="#ddd"/></svg></div>
<div class="b" style="left:808px;top:350px;width:17px;height:18px"><svg viewBox="0 0 20 20"><path d="M6 4h6l3 3v9H6z" fill="none" stroke="#ddd" stroke-width="1.300"/><path d="M10.500 8v6" stroke="#ddd" stroke-width="1.300"/></svg></div>
<div class="b" style="left:828px;top:350px;width:23px;height:18px"><svg viewBox="0 0 23 18"><path d="M4 15V3h6l2 2v4M8 13h6M11 10v6" fill="none" stroke="#ddd" stroke-width="1.300"/><path d="M16 8h5l-2.500 3z" fill="#ddd"/></svg></div>
<div class="b" style="left:854px;top:350px;width:17px;height:18px"><svg><use href="#folder"/></svg></div>
<div class="a" style="left:875px;top:355px;width:1px;height:8px;background:#666"></div>
<div class="b" style="left:880px;top:350px;width:17px;height:18px"><svg><use href="#copy"/></svg></div>
<div class="b" style="left:900px;top:350px;width:18px;height:18px"><svg viewBox="0 0 20 20"><path d="M4 4h4v4H4zM4 12h4v4H4zM10 8h6v4h-6z" fill="#ddd"/></svg></div>
<div class="a" style="left:921px;top:355px;width:1px;height:8px;background:#666"></div>
<div class="b" style="left:925px;top:350px;width:17px;height:18px"><svg viewBox="0 0 20 20"><path d="M4 5h12M6 7h8v9H6zM8 3h4M9 7v9M11 7v9" fill="none" stroke="#ddd" stroke-width="1.400"/></svg></div>

<div class="h" style="left:763px;top:376px;width:261px">Reference<i></i><b>✖</b></div>
<div class="a" style="left:763px;top:392px;width:261px;height:22px;background:#222"></div>
<div class="b" style="left:766px;top:394px;width:17px;height:18px"><svg><use href="#upcloud"/></svg></div>
<div class="b" style="left:786px;top:394px;width:18px;height:18px"><svg><use href="#folder"/></svg></div>
<div class="b" style="left:806px;top:394px;width:18px;height:18px"><svg viewBox="0 0 20 20"><path d="M7 7l6 6M13 7l-6 6" stroke="#ddd" stroke-width="2"/></svg></div>
<div class="a" style="left:827px;top:399px;width:1px;height:8px;background:#666"></div>
<div class="b" style="left:832px;top:394px;width:18px;height:18px"><svg><use href="#plus"/></svg></div>
<div class="b" style="left:852px;top:394px;width:18px;height:18px"><svg><use href="#fit"/></svg></div>
<div class="b" style="left:872px;top:394px;width:18px;height:18px"><svg><use href="#minus"/></svg></div>
<div class="a" style="left:893px;top:399px;width:1px;height:8px;background:#666"></div>
<div class="b" style="left:897px;top:394px;width:18px;height:18px"><svg viewBox="0 0 20 20" class="ic" style="stroke-width:1.300"><path d="M4 17l1-4 6-6 2 2-6 6zM12 4l4 4M14 3l3 3-2 2-3-3z"/></svg></div>
<div class="b bl" style="left:918px;top:394px;width:18px;height:18px"><svg viewBox="0 0 20 20"><path d="M6 17l-3-6 1-1 2 2V5h1.500v5-7H9v7-7h1.500v7-6H12v7-4h1.500v7l1-2 1.500.5L14 17z" fill="#eef6ff"/></svg></div>
<div class="a" style="left:939px;top:399px;width:1px;height:8px;background:#666"></div>
<div class="b" style="left:944px;top:394px;width:17px;height:18px"><svg><use href="#rotl"/></svg></div>
<div class="b dk" style="left:964px;top:394px;width:18px;height:18px"><svg><use href="#flip"/></svg></div>
<div class="b" style="left:984px;top:394px;width:17px;height:18px"><svg><use href="#rotl"/></svg></div>
<div class="a" style="left:1005px;top:399px;width:1px;height:8px;background:#666"></div>
<div class="a" style="left:1016px;top:394px;width:6px;height:18px;background:#4a4a4a;border-radius:2px"></div>
<div class="a ck" style="left:763px;top:414px;width:261px;height:55px;background-image:linear-gradient(45deg,#f3f3f3 25%,transparent 25%,transparent 75%,#f3f3f3 75%),linear-gradient(45deg,#f3f3f3 25%,transparent 25%,transparent 75%,#f3f3f3 75%);background-size:12px 12px;background-position:0 0,6px 6px"></div>
<svg class="a" style="left:875px;top:414px" width="37" height="55" viewBox="0 0 37 55">
<rect width="37" height="55" fill="#d8dccb"/><rect width="6" height="55" fill="#5a5d5a"/><rect x="6" width="5" height="55" fill="#b8bcb6"/>
<rect x="22" width="15" height="10" fill="#6ea84a"/><rect x="14" y="20" width="23" height="6" fill="#3c4a44"/><rect x="26" y="30" width="11" height="25" fill="#8a7a6a"/>
<circle cx="19" cy="13" r="4.500" fill="#33241f"/><path d="M13 24l11-1 5 8 1 16-4 8H15l-3-10z" fill="#c4ab88"/><path d="M18 24h5v14h-5z" fill="#ece6da"/><path d="M26 36l5 4-3 8z" fill="#6e8a70"/>
</svg>
<div class="a" style="left:763px;top:469px;width:261px;height:1px;background:#224a6b"></div>

<div class="h" style="left:763px;top:472px;width:261px">Brush Size<i></i><b>✖</b></div>
<div class="a" style="left:763px;top:488px;width:261px;height:43px;background:#3b3b3b"></div>
<div class="cell" style="left:763px"><s style="width:1px;height:1px;background:#777"></s><u>1</u></div>
<div class="cell" style="left:793px"><s style="width:2px;height:1px;background:#888"></s><u>1.5</u></div>
<div class="cell" style="left:823px"><s style="width:2px;height:2px;background:#ccc"></s><u>2</u></div>
<div class="cell" style="left:853px"><s style="width:3px;height:3px"></s><u>3</u></div>
<div class="cell" style="left:883px"><s style="width:4px;height:4px"></s><u>4</u></div>
<div class="cell" style="left:913px"><s style="width:4px;height:4px"></s><u>5</u></div>
<div class="cell" style="left:943px"><s style="width:6px;height:6px"></s><u>7</u></div>
<div class="cell" style="left:973px"><s style="width:8px;height:8px"></s><u>10</u></div>
<div class="a" style="left:1010px;top:488px;width:14px;height:43px;background:#2e2e2e"></div>
<div class="a" style="left:1011px;top:497px;width:13px;height:10px;background:#6a6a6a;border-radius:4px"></div>
<div class="a" style="left:1014px;top:489px;border:4px solid transparent;border-bottom:5px solid #888"></div>
<div class="a" style="left:1014px;top:524px;border:4px solid transparent;border-top:5px solid #888"></div>
</body></html>
